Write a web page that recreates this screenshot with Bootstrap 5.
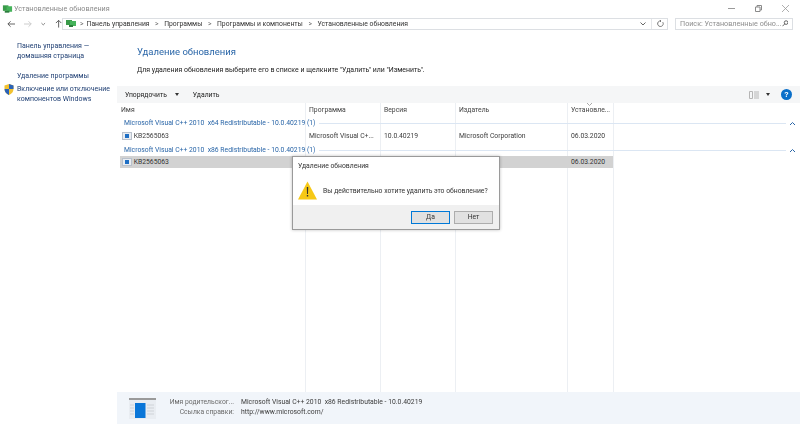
<!DOCTYPE html>
<html lang="ru">
<head>
    <meta charset="UTF-8">
    <meta name="viewport" content="width=device-width, initial-scale=1.0">
    <title>Установленные обновления</title>
    <link href="https://cdn.jsdelivr.net/npm/bootstrap@5.3.2/dist/css/bootstrap.min.css" rel="stylesheet">
    <style>
        html, body { height: 424px; overflow: hidden; }
        body { font-family: Roboto, "Noto Sans", sans-serif; font-size: 6.8px; line-height: 10px; color: #3c3c3c; background: #fff; filter: blur(.35px); }
        .win-title { height: 17px; padding-left: 2px; color: #8a8a8a; font-size: 7.2px; }
        .win-title span { margin-left: 1px; }
        .win-ctl { margin-left: auto; gap: 20px; padding-right: 11px; }
        .nav-strip { height: 13px; padding: 0 7px; }
        .nav-btns { width: 55px; gap: 9px; }
        .addr-box { width: 606px; height: 12px; border: 1px solid #dcdfe3; padding: 0 3px; color: #333; }
        .addr-box i { font-style: normal; margin: 0 5.5px; color: #666; }
        .addr-box i:first-of-type { margin: 0 3px; }
        .addr-tail { margin-left: auto; gap: 5px; }
        .addr-sep { width: 1px; height: 10px; background: #e4e6e9; }
        .search-box { width: 118px; height: 12px; margin-left: 7px; border: 1px solid #dcdfe3; padding: 0 4px; color: #8d8d8d; white-space: nowrap; font-size: 7.2px; }
        .search-box svg { margin-left: auto; }
        .main-wrap { height: 394px; }
        .side-col { width: 117px; padding: 11px 0 0 17px; color: #1f3f73; font-size: 7px; }
        .side-col p { margin: 0 0 10px; line-height: 10px; }
        .side-col p + p { margin-bottom: 3px; }
        .side-col p + p + p { margin-bottom: 0; }
        .side-shield { position: absolute; left: -13px; top: 0; }
        .body-col { width: 683px; }
        .page-head { height: 56px; padding: 15px 0 0 20px; color: #222; font-size: 6.95px; }
        .page-head h1 { font-size: 9.5px; line-height: 13px; font-weight: 400; color: #2a66a8; margin: 0 0 7px; }
        .tool-strip { height: 17px; padding: 0 8px; background: #f5f6f7; color: #222; gap: 14px; }
        .tool-right { margin-left: auto; gap: 7px; }
        .help-dot { width: 11px; height: 11px; border-radius: 50%; background: #0a6fc9; color: #fff; font-size: 8px; font-weight: 700; line-height: 11px; text-align: center; margin-left: 4px; }
        .caret-dn { width: 0; height: 0; border: 2.5px solid transparent; border-top: 3px solid #333; border-bottom: 0; }
        .list-wrap { height: 289px; }
        .col-rule { position: absolute; top: 0; bottom: 0; width: 1px; background: #eceff3; }
        .list-head { height: 14px; padding-left: 4px; color: #444; position: relative; }
        .list-head > div, .item-row > div { flex: none; }
        .c1 { width: 184px; }
        .c2 { width: 75px; padding-left: 4px; }
        .c3 { width: 75px; padding-left: 4px; }
        .c4 { width: 112px; padding-left: 4px; }
        .c5 { width: 46px; padding-left: 4px; }
        .sort-tick { position: absolute; left: 470px; top: 0; }
        .grp-row { height: 12px; padding: 0 5px 0 7px; color: #2a66a8; position: relative; gap: 4px; }
        .item-row + .grp-row { margin-top: 2px; }
        .grp-line { flex: 1; height: 1px; background: #dbe6f3; }
        .item-row { height: 13px; padding-left: 0; margin-left: 3px; width: 493px; position: relative; }
        .item-row .c1 { width: 185px; }
        .item-on { height: 12px; background: #d2d2d2; color: #333; }
        .kb-ico { width: 10px; height: 8px; margin-right: 0; margin-left: 2px; background: #e9edf2; border: 1px solid #b9c1cc; display: inline-block; position: relative; }
        .kb-ico::after { content: ""; position: absolute; left: 2px; top: 1px; width: 4px; height: 4px; background: #1f6fc4; }
        .dlg-box { position: absolute; left: 175px; top: 53px; width: 208px; height: 74px; background: #fff; border: 1px solid #9a9a9a; box-shadow: 0 0 3px rgba(0,0,0,.25); color: #333; }
        .dlg-title { height: 18px; padding: 4px 0 0 5px; }
        .dlg-body { height: 30px; padding: 2px 0 1px 5px; gap: 6px; white-space: nowrap; }
        .dlg-foot { height: 24px; background: #f0f0f0; padding-right: 6px; gap: 4px; }
        .dlg-btn { width: 39px; height: 13px; border: 1px solid #adadad; background: #e1e1e1; text-align: center; line-height: 11px; }
        .dlg-btn-on { border-color: #0078d7; }
        .info-panel { height: 32px; background: #f1f5fa; padding: 0 0 3px 12px; }
        .info-thumb { width: 27px; height: 21px; margin: 3px 13px 0 0; }
        .info-grid { display: grid; grid-template-columns: 65px auto; column-gap: 7px; row-gap: 0; }
        .info-key { color: #6b6b6b; text-align: right; white-space: nowrap; }
    </style>
</head>
<body>
    <div class="win-title d-flex align-items-center">
        <svg width="11" height="10" viewBox="0 0 12 10"><rect x="1" y="1" width="6" height="6" fill="#3a9a4a"/><rect x="5" y="2" width="6" height="6" fill="#45b35a"/><rect x="3" y="7" width="5" height="2" fill="#2b7d3c"/></svg>
        <span>Установленные обновления</span>
        <div class="win-ctl d-flex align-items-center">
            <svg width="7" height="7" viewBox="0 0 7 7"><path d="M0 3.500h7" stroke="#9a9a9a"/></svg>
            <svg width="7" height="7" viewBox="0 0 7 7" fill="none" stroke="#8a8a8a"><path d="M.5 2h4.500v4.500h-4.500zM2 2V.5h4.500V5H5"/></svg>
            <svg width="7" height="7" viewBox="0 0 7 7"><path d="M0 0l7 7M7 0l-7 7" stroke="#9a9a9a" stroke-width=".8"/></svg>
        </div>
    </div>
    <div class="nav-strip d-flex align-items-center">
        <div class="nav-btns d-flex align-items-center">
            <svg width="9" height="8" viewBox="0 0 9 8" fill="none" stroke="#555"><path d="M9 4H1M4 1L1 4l3 3"/></svg>
            <svg width="9" height="8" viewBox="0 0 9 8" fill="none" stroke="#c8c8c8"><path d="M0 4h8M5 1l3 3-3 3"/></svg>
            <svg width="5" height="4" viewBox="0 0 5 4" fill="none" stroke="#777"><path d="M.5 1l2 2 2-2"/></svg>
            <svg width="8" height="9" viewBox="0 0 8 9" fill="none" stroke="#555"><path d="M4 9V1M1 4l3-3 3 3"/></svg>
        </div>
        <div class="addr-box d-flex align-items-center">
            <svg width="11" height="9" viewBox="0 0 11 9"><rect x="0" y="1" width="6" height="5" fill="#3a9a4a"/><rect x="4" y="2" width="6" height="5" fill="#45b35a"/><rect x="3" y="6" width="4" height="2" fill="#2b7d3c"/></svg>
            <i>&gt;</i>Панель управления<i>&gt;</i>Программы<i>&gt;</i>Программы и компоненты<i>&gt;</i>Установленные обновления
            <div class="addr-tail d-flex align-items-center">
                <svg width="6" height="4" viewBox="0 0 6 4" fill="none" stroke="#666"><path d="M.5 .5l2.500 2.500 2.500-2.500"/></svg>
                <span class="addr-sep"></span>
                <svg width="7" height="7" viewBox="0 0 7 7" fill="none" stroke="#777"><path d="M5.800 2.200A2.800 2.800 0 1 1 3.500 .9M3 0l1 1-1 1"/></svg>
            </div>
        </div>
        <div class="search-box d-flex align-items-center">
            Поиск: Установленные обно...
            <svg width="7" height="7" viewBox="0 0 7 7" fill="none" stroke="#555"><circle cx="4.500" cy="2.500" r="2"/><path d="M3 4L.5 6.500"/></svg>
        </div>
    </div>
    <div class="main-wrap d-flex">
        <div class="side-col">
            <p>Панель управления —<br>домашняя страница</p>
            <p>Удаление программы</p>
            <p class="position-relative">
                <svg class="side-shield" width="10" height="11" viewBox="0 0 10 11"><path d="M5 0l4.500 1.500V5c0 3-2 5-4.500 6C2.500 10 .5 8 .5 5V1.500z" fill="#f2c230"/><path d="M5 0l4.500 1.500V5H5zM5 5v6C2.500 10 .5 8 .5 5z" fill="#2a62b8"/></svg>
                Включение или отключение<br>компонентов Windows
            </p>
        </div>
        <div class="body-col">
            <div class="page-head">
                <h1>Удаление обновления</h1>
                <div>Для удаления обновления выберите его в списке и щелкните "Удалить" или "Изменить".</div>
            </div>
            <div class="tool-strip d-flex align-items-center">
                <div class="d-flex align-items-center gap-2">Упорядочить <span class="caret-dn"></span></div>
                <div>Удалить</div>
                <div class="tool-right d-flex align-items-center">
                    <svg width="10" height="8" viewBox="0 0 10 8" fill="none" stroke="#b5b5b5"><path d="M.5 .5h3v7h-3zM5 1h5M5 3h5M5 5h5M5 7h5"/></svg>
                    <span class="caret-dn"></span>
                    <span class="help-dot">?</span>
                </div>
            </div>
            <div class="list-wrap position-relative">
                <div class="col-rule" style="left:188px"></div>
                <div class="col-rule" style="left:263px"></div>
                <div class="col-rule" style="left:338px"></div>
                <div class="col-rule" style="left:450px"></div>
                <div class="col-rule" style="left:496px"></div>
                <div class="list-head d-flex align-items-center">
                    <svg class="sort-tick" width="5" height="3" viewBox="0 0 5 3" fill="none" stroke="#aaa"><path d="M0 0l2.500 2.500L5 0"/></svg>
                    <div class="c1">Имя</div>
                    <div class="c2">Программа</div>
                    <div class="c3">Версия</div>
                    <div class="c4">Издатель</div>
                    <div class="c5 text-nowrap">Установле...</div>
                </div>
                <div class="grp-row d-flex align-items-center">
                    <span>Microsoft Visual C++ 2010&nbsp; x64 Redistributable - 10.0.40219 (1)</span>
                    <span class="grp-line"></span>
                    <svg width="5" height="3" viewBox="0 0 5 3" fill="none" stroke="#2a66a8"><path d="M0 3l2.500-2.500L5 3"/></svg>
                </div>
                <div class="item-row d-flex align-items-center">
                    <div class="c1"><span class="kb-ico align-middle"></span> KB2565063</div>
                    <div class="c2 text-nowrap">Microsoft Visual C+...</div>
                    <div class="c3">10.0.40219</div>
                    <div class="c4">Microsoft Corporation</div>
                    <div class="c5">06.03.2020</div>
                </div>
                <div class="grp-row d-flex align-items-center">
                    <span>Microsoft Visual C++ 2010&nbsp; x86 Redistributable - 10.0.40219 (1)</span>
                    <span class="grp-line"></span>
                    <svg width="5" height="3" viewBox="0 0 5 3" fill="none" stroke="#2a66a8"><path d="M0 3l2.500-2.500L5 3"/></svg>
                </div>
                <div class="item-row item-on d-flex align-items-center">
                    <div class="c1"><span class="kb-ico align-middle"></span> KB2565063</div>
                    <div class="c2"></div>
                    <div class="c3"></div>
                    <div class="c4"></div>
                    <div class="c5">06.03.2020</div>
                </div>
                <div class="dlg-box">
                    <div class="dlg-title">Удаление обновления</div>
                    <div class="dlg-body d-flex align-items-center">
                        <svg width="19" height="19" viewBox="0 0 19 19"><path d="M9.500 .5L19 18.500H0z" fill="#f6c816"/><path d="M8.800 6h1.400l-.2 7h-1zM8.800 14h1.400v1.600H8.800z" fill="#333"/></svg>
                        <span>Вы действительно хотите удалить это обновление?</span>
                    </div>
                    <div class="dlg-foot d-flex align-items-center justify-content-end">
                        <div class="dlg-btn dlg-btn-on">Да</div>
                        <div class="dlg-btn">Нет</div>
                    </div>
                </div>
            </div>
            <div class="info-panel d-flex align-items-center">
                <svg class="info-thumb" viewBox="0 0 27 21"><rect width="27" height="21" fill="#e9edf2"/><rect width="27" height="2" fill="#9a9a9a"/><rect x="6" y="5" width="10.500" height="15" fill="#0a76d8"/><path d="M1 7h4M1 10h4M1 13h4M1 16h4M18 7h7M18 10h7M18 13h7M18 16h7" stroke="#cfd3d8"/></svg>
                <div class="info-grid">
                    <div class="info-key">Имя родительског...</div>
                    <div>Microsoft Visual C++ 2010&nbsp; x86 Redistributable - 10.0.40219</div>
                    <div class="info-key">Ссылка справки:</div>
                    <div>http://www.microsoft.com/</div>
                </div>
            </div>
        </div>
    </div>
    <script src="https://cdn.jsdelivr.net/npm/bootstrap@5.3.2/dist/js/bootstrap.bundle.min.js"></script>
</body>
</html>
